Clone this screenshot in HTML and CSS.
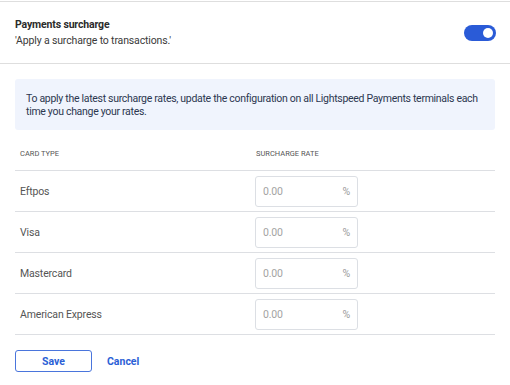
FILE: index.html
```html
<!DOCTYPE html>
<html lang="en">
  <head>
    <meta charset="UTF-8" />
    <meta name="viewport" content="width=device-width, initial-scale=1.0" />
    <title>Payments surcharge</title>
    <link rel="stylesheet" href="styles.css">
  </head>
  <body>
    <div class="setting">
      <div>
        <div class="setting-title">Payments surcharge</div>
        <div class="setting-desc">'Apply a surcharge to transactions.'</div>
      </div>
      <span class="toggle"><span class="knob"></span></span>
    </div>

    <div class="content">
      <div class="notice">
        To apply the latest surcharge rates, update the configuration on all Lightspeed Payments terminals each
        time you change your rates.
      </div>

      <div class="table">
        <div class="row head">
          <div class="cell first">Card type</div>
          <div class="cell">Surcharge rate</div>
        </div>
        <div class="row">
          <div class="cell first">Eftpos</div>
          <div class="cell"><label class="rate"><input type="text" placeholder="0.00" /><span>%</span></label></div>
        </div>
        <div class="row">
          <div class="cell first">Visa</div>
          <div class="cell"><label class="rate"><input type="text" placeholder="0.00" /><span>%</span></label></div>
        </div>
        <div class="row">
          <div class="cell first">Mastercard</div>
          <div class="cell"><label class="rate"><input type="text" placeholder="0.00" /><span>%</span></label></div>
        </div>
        <div class="row">
          <div class="cell first">American Express</div>
          <div class="cell"><label class="rate"><input type="text" placeholder="0.00" /><span>%</span></label></div>
        </div>
      </div>

      <div class="actions">
        <button class="btn-save" type="button">Save</button>
        <button class="btn-cancel" type="button">Cancel</button>
      </div>
    </div>
  </body>
</html>
```

FILE: styles.css
```css
body {
  margin: 0;
  padding: 0;
  font-family: Roboto, "Liberation Sans", sans-serif;
  font-size: 10.5px;
  letter-spacing: -0.15px;
  color: #333;
  background: #fff;
}
.setting {
  display: flex;
  align-items: center;
  justify-content: space-between;
  margin-top: 1px;
  height: 61px;
  padding: 0 14px 0 15px;
  border-top: 1px solid #dedede;
  border-bottom: 1px solid #dedede;
}
.setting-title {
  font-weight: bold;
  color: #2b2b2b;
  line-height: 16px;
}
.setting-desc {
  color: #3a3a3a;
  line-height: 16px;
}
.toggle {
  display: block;
  position: relative;
  width: 32px;
  height: 16px;
  border-radius: 8px;
  background: #2a5bd7;
}
.knob {
  position: absolute;
  top: 3px;
  right: 3px;
  width: 10px;
  height: 10px;
  border-radius: 50%;
  background: #fff;
}
.content {
  padding: 15px 15px 0 15px;
}
.notice {
  background: #f0f4fd;
  border-radius: 3px;
  padding: 13px 10px 12px 11px;
  line-height: 13px;
  letter-spacing: -0.3px;
  color: #2c3750;
}
.table {
  margin-top: 7px;
}
.row {
  display: grid;
  grid-template-columns: 240px 1fr;
  align-items: center;
  height: 40px;
  border-bottom: 1px solid #dddfe3;
}
.row.head {
  height: 33px;
  font-size: 7.5px;
  letter-spacing: 0;
  text-transform: uppercase;
  color: #555;
}
.cell {
  color: #555;
}
.cell.first {
  padding-left: 5px;
}
.row.head .cell:last-child {
  padding-left: 1px;
}
.rate {
  display: flex;
  align-items: center;
  width: 103px;
  height: 31px;
  box-sizing: border-box;
  border: 1px solid #dcdfe4;
  border-radius: 3px;
  padding: 0 7px 0 7px;
}
.rate input {
  flex: 1;
  min-width: 0;
  border: none;
  outline: none;
  padding: 0;
  font-family: inherit;
  font-size: 10.5px;
  letter-spacing: -0.15px;
  color: #333;
  background: transparent;
}
.rate input::placeholder {
  color: #a3a3a3;
}
.rate span {
  color: #9a9a9a;
}
.actions {
  display: flex;
  align-items: center;
  gap: 15px;
  margin-top: 15px;
}
.btn-save,
.btn-cancel {
  font-family: inherit;
  font-size: 10.5px;
  font-weight: bold;
  color: #2c5fd6;
  cursor: pointer;
}
.btn-save {
  width: 77px;
  height: 22px;
  background: #fff;
  border: 1px solid #4a75dc;
  border-radius: 3px;
}
.btn-cancel {
  background: none;
  border: none;
  padding: 0;
}
```
